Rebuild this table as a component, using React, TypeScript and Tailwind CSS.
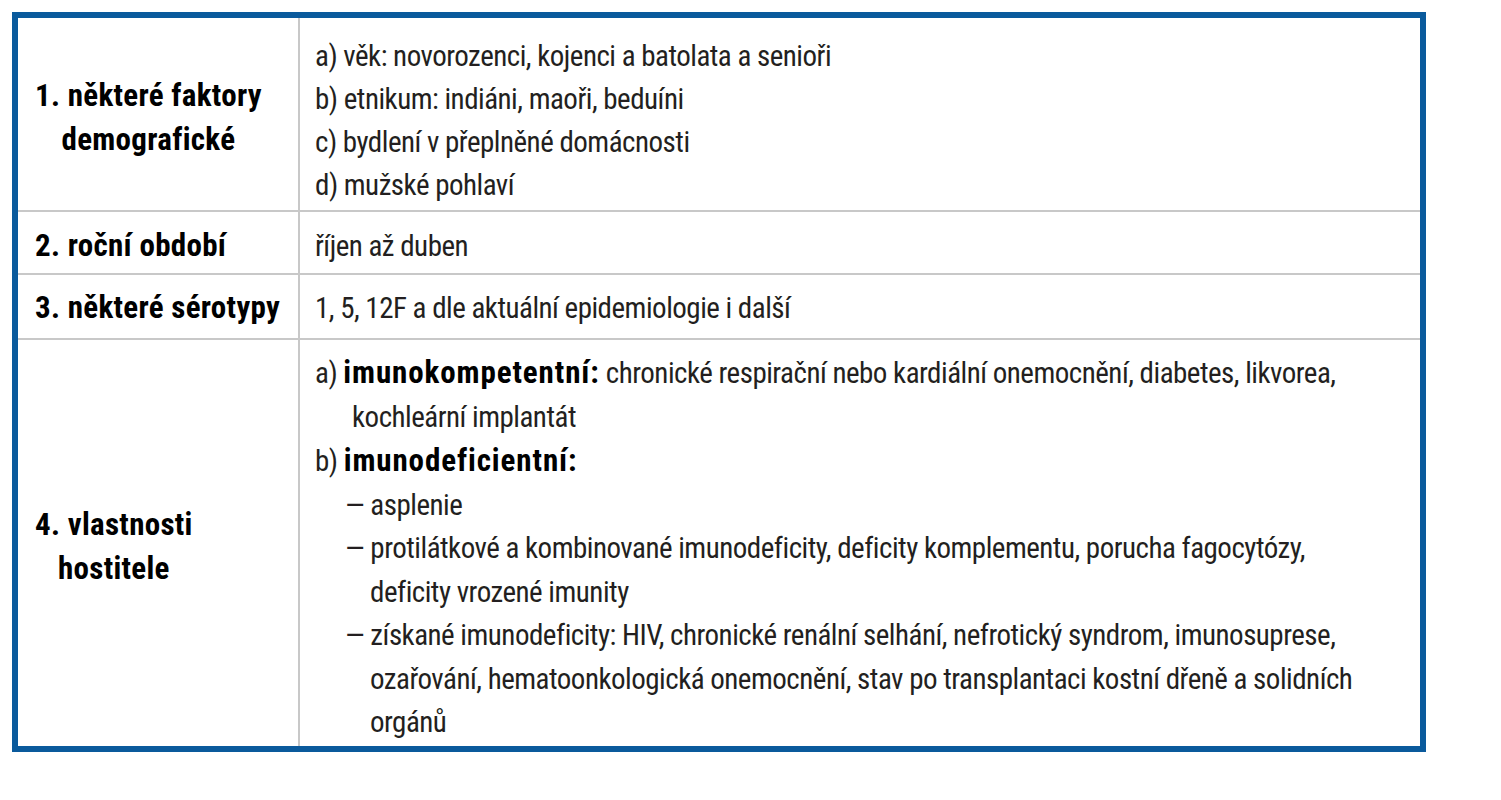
const font = { fontFamily: "'Roboto Condensed', 'DejaVu Sans Condensed', 'Liberation Sans', sans-serif" };

function Label({ lines }: { lines: string[] }) {
  return (
    <div className="inline-block text-center font-bold text-black text-[31px] leading-[44px] tracking-[0.3px]">
      {lines.map((l) => (
        <div key={l}>{l}</div>
      ))}
    </div>
  );
}

function B({ children }: { children: React.ReactNode }) {
  return <b className="font-bold text-black text-[31px] tracking-[0.9px]">{children}</b>;
}

export default function App() {
  return (
    <div className="bg-white w-[1501px] h-[800px] pt-[12px] pl-[12px]" style={font}>
      <div className="w-[1414px] border-[6px] border-[#0a5a9c] text-[29px] text-[#231f20] tracking-[-0.5px]">
        {/* 1 */}
        <div className="flex h-[194px] border-b-2 border-[#c8c8c8]">
          <div className="w-[282px] shrink-0 border-r-2 border-[#c8c8c8] flex items-center pl-[17px] pt-[7px]">
            <Label lines={["1. některé faktory", "demografické"]} />
          </div>
          <div className="flex-1 pl-[15px] pt-[17px] leading-[43px] whitespace-nowrap">
            <div>a) věk: novorozenci, kojenci a batolata a senioři</div>
            <div>b) etnikum: indiáni, maoři, beduíni</div>
            <div>c) bydlení v přeplněné domácnosti</div>
            <div>d) mužské pohlaví</div>
          </div>
        </div>

        {/* 2 */}
        <div className="flex h-[63px] border-b-2 border-[#c8c8c8]">
          <div className="w-[282px] shrink-0 border-r-2 border-[#c8c8c8] flex items-center pl-[17px] pt-[7px]">
            <Label lines={["2. roční období"]} />
          </div>
          <div className="flex-1 pl-[15px] pt-[13px] leading-[43px]">říjen až duben</div>
        </div>

        {/* 3 */}
        <div className="flex h-[65px] border-b-2 border-[#c8c8c8]">
          <div className="w-[282px] shrink-0 border-r-2 border-[#c8c8c8] flex items-center pl-[17px] pt-[2px]">
            <Label lines={["3. některé sérotypy"]} />
          </div>
          <div className="flex-1 pl-[15px] pt-[12px] leading-[43px]">1, 5, 12F a dle aktuální epidemiologie i další</div>
        </div>

        {/* 4 */}
        <div className="flex h-[406px]">
          <div className="w-[282px] shrink-0 border-r-2 border-[#c8c8c8] flex items-center pl-[17px] pt-[7px]">
            <Label lines={["4. vlastnosti", "hostitele"]} />
          </div>
          <div className="flex-1 pl-[15px] pt-[11px] leading-[43.5px] whitespace-nowrap">
            <div>
              a) <B>imunokompetentní:</B> chronické respirační nebo kardiální onemocnění, diabetes, likvorea,
            </div>
            <div className="pl-[37px]">kochleární implantát</div>
            <div>
              b) <B>imunodeficientní:</B>
            </div>
            <div className="pl-[30px]">— asplenie</div>
            <div className="pl-[30px]">— protilátkové a kombinované imunodeficity, deficity komplementu, porucha fagocytózy,</div>
            <div className="pl-[55px]">deficity vrozené imunity</div>
            <div className="pl-[30px]">— získané imunodeficity: HIV, chronické renální selhání, nefrotický syndrom, imunosuprese,</div>
            <div className="pl-[55px]">ozařování, hematoonkologická onemocnění, stav po transplantaci kostní dřeně a solidních</div>
            <div className="pl-[55px]">orgánů</div>
          </div>
        </div>
      </div>
    </div>
  );
}
